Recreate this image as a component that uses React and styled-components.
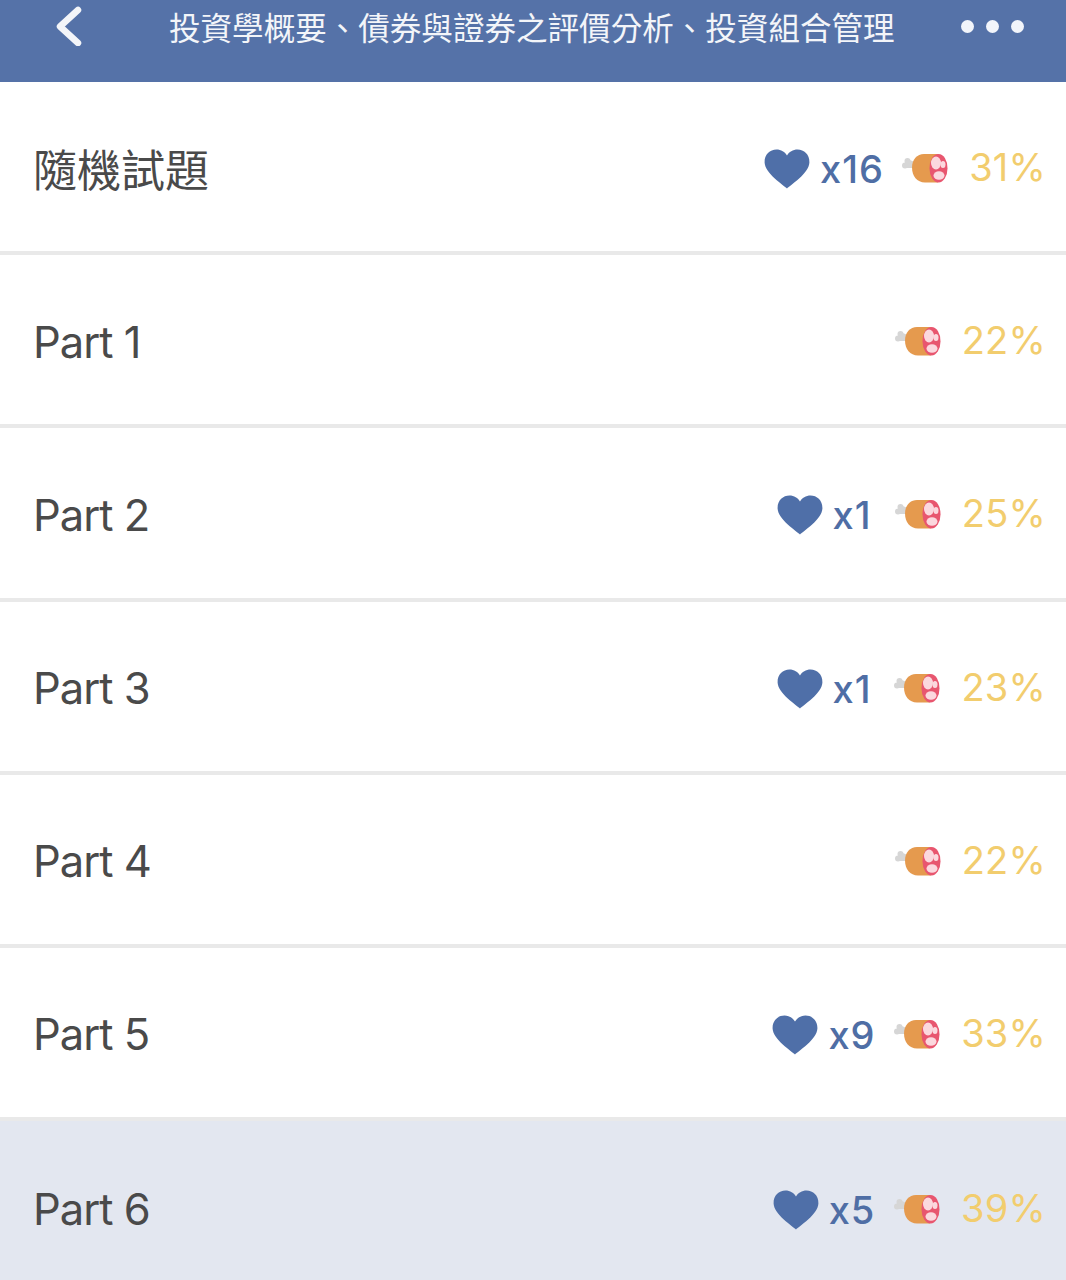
import React from "react";
import styled, { createGlobalStyle } from "styled-components";

const Global = createGlobalStyle`
  html, body { margin: 0; padding: 0; background: #fff; }
  body { font-family: Inter, "Noto Sans CJK TC", sans-serif; }
`;
const Page = styled.div`
  width: 1066px;
  height: 1280px;
  overflow: hidden;
  background: #fff;
`;
const Header = styled.header`
  height: 82px;
  box-sizing: border-box;
  background: #5572a8;
  display: flex;
  align-items: flex-start;
  padding: 6px 42px 0 54px;
`;
const Back = styled.svg`
  width: 30px;
  height: 40px;
  flex: none;
`;
const Title = styled.h1`
  flex: 1;
  margin: 0;
  padding-left: 85px;
  font: 400 31.55px/40px "Noto Sans CJK TC", sans-serif;
  color: #f3f5f9;
  white-space: nowrap;
`;
const Dots = styled.div`
  display: flex;
  gap: 12px;
  margin-top: 14px;
`;
const Dot = styled.span`
  width: 13px;
  height: 13px;
  border-radius: 50%;
  background: #f2f5fb;
`;
const Row = styled.div`
  height: 173.2px;
  box-sizing: border-box;
  display: flex;
  align-items: center;
  justify-content: space-between;
  padding: 5px 20px 0 33px;
  background: ${p => (p.$active ? "#e3e7f0" : "#fff")};
  border-bottom: ${p => (p.$active ? "0" : "4px solid #e9e9e9")};
`;
const Label = styled.div`
  font: 370 43.5px/1 Inter, "Noto Sans CJK TC", sans-serif;
  color: #4a4a4a;
  letter-spacing: -1px;
`;
const CjkLabel = styled(Label)`
  font-family: "Noto Sans CJK TC", sans-serif;
  font-size: 44px;
  font-weight: 400;
  letter-spacing: 0;
  position: relative;
  top: -1px;
`;
const Stats = styled.div`
  display: flex;
  align-items: center;
`;
const HeartSlot = styled.div`
  width: 144px;
  display: flex;
  align-items: center;
  justify-content: center;
  gap: 10px;
`;
const HeartIcon = styled.svg`
  width: 46px;
  height: 40px;
  display: block;
`;
const Count = styled.span`
  font: 450 38px/1 Inter, sans-serif;
  color: #4f6ea5;
  letter-spacing: 1px;
`;
const MeatGroup = styled.div`
  width: 150px;
  display: flex;
  align-items: center;
  justify-content: flex-end;
`;
const Meat = styled.svg`
  width: 46px;
  height: 30px;
  display: block;
  margin: -2px 21px 0 0;
  flex: none;
`;
const Percent = styled.span`
  font: 400 38px/1 Inter, sans-serif;
  color: #f2cd6e;
  letter-spacing: 0.2px;
  position: relative;
  top: -2px;
`;

const Heart = () => (
  <HeartIcon viewBox="0 0 46 40">
    <path
      d="M23 39.5C20 36.5 1 24.5 .6 13.5.3 5.5 6 .6 12.5.6 17 .6 21 3 23 6.5 25 3 29 .6 33.5.6 40 .6 45.700 5.500 45.400 13.500 45 24.500 26 36.500 23 39.500Z"
      fill="#4f6fa8"
    />
  </HeartIcon>
);

const Ham = () => (
  <Meat viewBox="0 0 46 30">
    <g fill="#d6d6d6">
      <circle cx="5.500" cy="8" r="3" />
      <circle cx="3" cy="12.500" r="3" />
      <path d="M5 6 13 9 12 15 4 15Z" />
    </g>
    <path d="M22 1C15 1 10 6.500 10 14.500 10 23 15 29.500 23 29.500H36V1Z" fill="#e59a4e" />
    <ellipse cx="36.500" cy="15.200" rx="9" ry="14.300" fill="#e8566f" />
    <ellipse cx="34" cy="10" rx="5" ry="6.500" fill="#fbd8de" />
    <ellipse cx="41" cy="11.500" rx="2.500" ry="3.500" fill="#fbd8de" />
    <ellipse cx="37" cy="22.500" rx="5.500" ry="4.300" fill="#fbd8de" />
  </Meat>
);

const rows = [
  { name: "隨機試題", hearts: 16, pct: 31, cjk: true },
  { name: "Part 1", pct: 22 },
  { name: "Part 2", hearts: 1, pct: 25 },
  { name: "Part 3", hearts: 1, pct: 23 },
  { name: "Part 4", pct: 22 },
  { name: "Part 5", hearts: 9, pct: 33 },
  { name: "Part 6", hearts: 5, pct: 39, active: true },
];

export default function App() {
  return (
    <Page>
      <Global />
      <Header>
        <Back viewBox="0 0 30 40">
          <path d="M24 4 6 20.500 24 37" fill="none" stroke="#f3f5f9" strokeWidth="6.500" strokeLinecap="round" strokeLinejoin="round" />
        </Back>
        <Title>投資學概要、債券與證券之評價分析、投資組合管理</Title>
        <Dots>
          <Dot />
          <Dot />
          <Dot />
        </Dots>
      </Header>
      {rows.map(r => {
        const Name = r.cjk ? CjkLabel : Label;
        return (
          <Row key={r.name} $active={r.active}>
            <Name>{r.name}</Name>
            <Stats>
              <HeartSlot>
                {r.hearts && (
                  <>
                    <Heart />
                    <Count>x{r.hearts}</Count>
                  </>
                )}
              </HeartSlot>
              <MeatGroup>
                <Ham />
                <Percent>{r.pct}%</Percent>
              </MeatGroup>
            </Stats>
          </Row>
        );
      })}
    </Page>
  );
}
